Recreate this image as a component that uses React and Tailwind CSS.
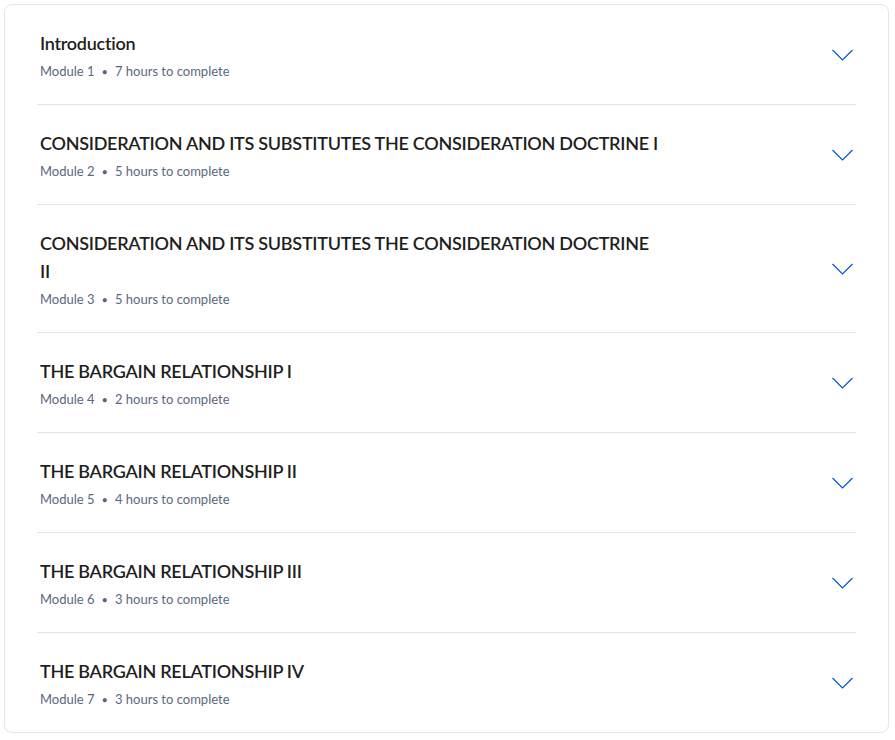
const modules = [
  { title: "Introduction", hours: 7 },
  { title: "CONSIDERATION AND ITS SUBSTITUTES THE CONSIDERATION DOCTRINE I", hours: 5 },
  { title: "CONSIDERATION AND ITS SUBSTITUTES THE CONSIDERATION DOCTRINE II", hours: 5 },
  { title: "THE BARGAIN RELATIONSHIP I", hours: 2 },
  { title: "THE BARGAIN RELATIONSHIP II", hours: 4 },
  { title: "THE BARGAIN RELATIONSHIP III", hours: 3 },
  { title: "THE BARGAIN RELATIONSHIP IV", hours: 3 },
];

const Chevron = () => (
  <svg width="24" height="24" viewBox="0 0 24 24" fill="none" className="shrink-0">
    <path d="M0.5 7l10 10 10-10" stroke="#0056d2" strokeWidth="1.2" />
  </svg>
);

const App = () => {
  return (
    <div className="min-h-screen bg-white pl-1 pt-1 font-['Lato',sans-serif]">
      <div className="w-[885px] rounded-lg border border-[#e1e5ee] bg-white px-8">
        {modules.map((item, index) => (
          <button
            type="button"
            key={item.title}
            className={
              "flex w-full items-center justify-between pt-6 pb-[23px] text-left " +
              (index < modules.length - 1 ? "border-b border-[#e1e5ee]" : "")
            }
          >
            <div className="pl-[3px]">
              <h3 className="max-w-[620px] text-lg leading-7 font-semibold tracking-[-0.015em] text-[#1f1f1f]">
                {item.title}
              </h3>
              <p className="mt-1 h-5 text-[13px] leading-5 text-[#5b6780]">
                Module {index + 1}
                <span className="mx-[7px] text-[11px] leading-none">•</span>
                {item.hours} hours to complete
              </p>
            </div>
            <Chevron />
          </button>
        ))}
      </div>
    </div>
  );
};

export default App;
